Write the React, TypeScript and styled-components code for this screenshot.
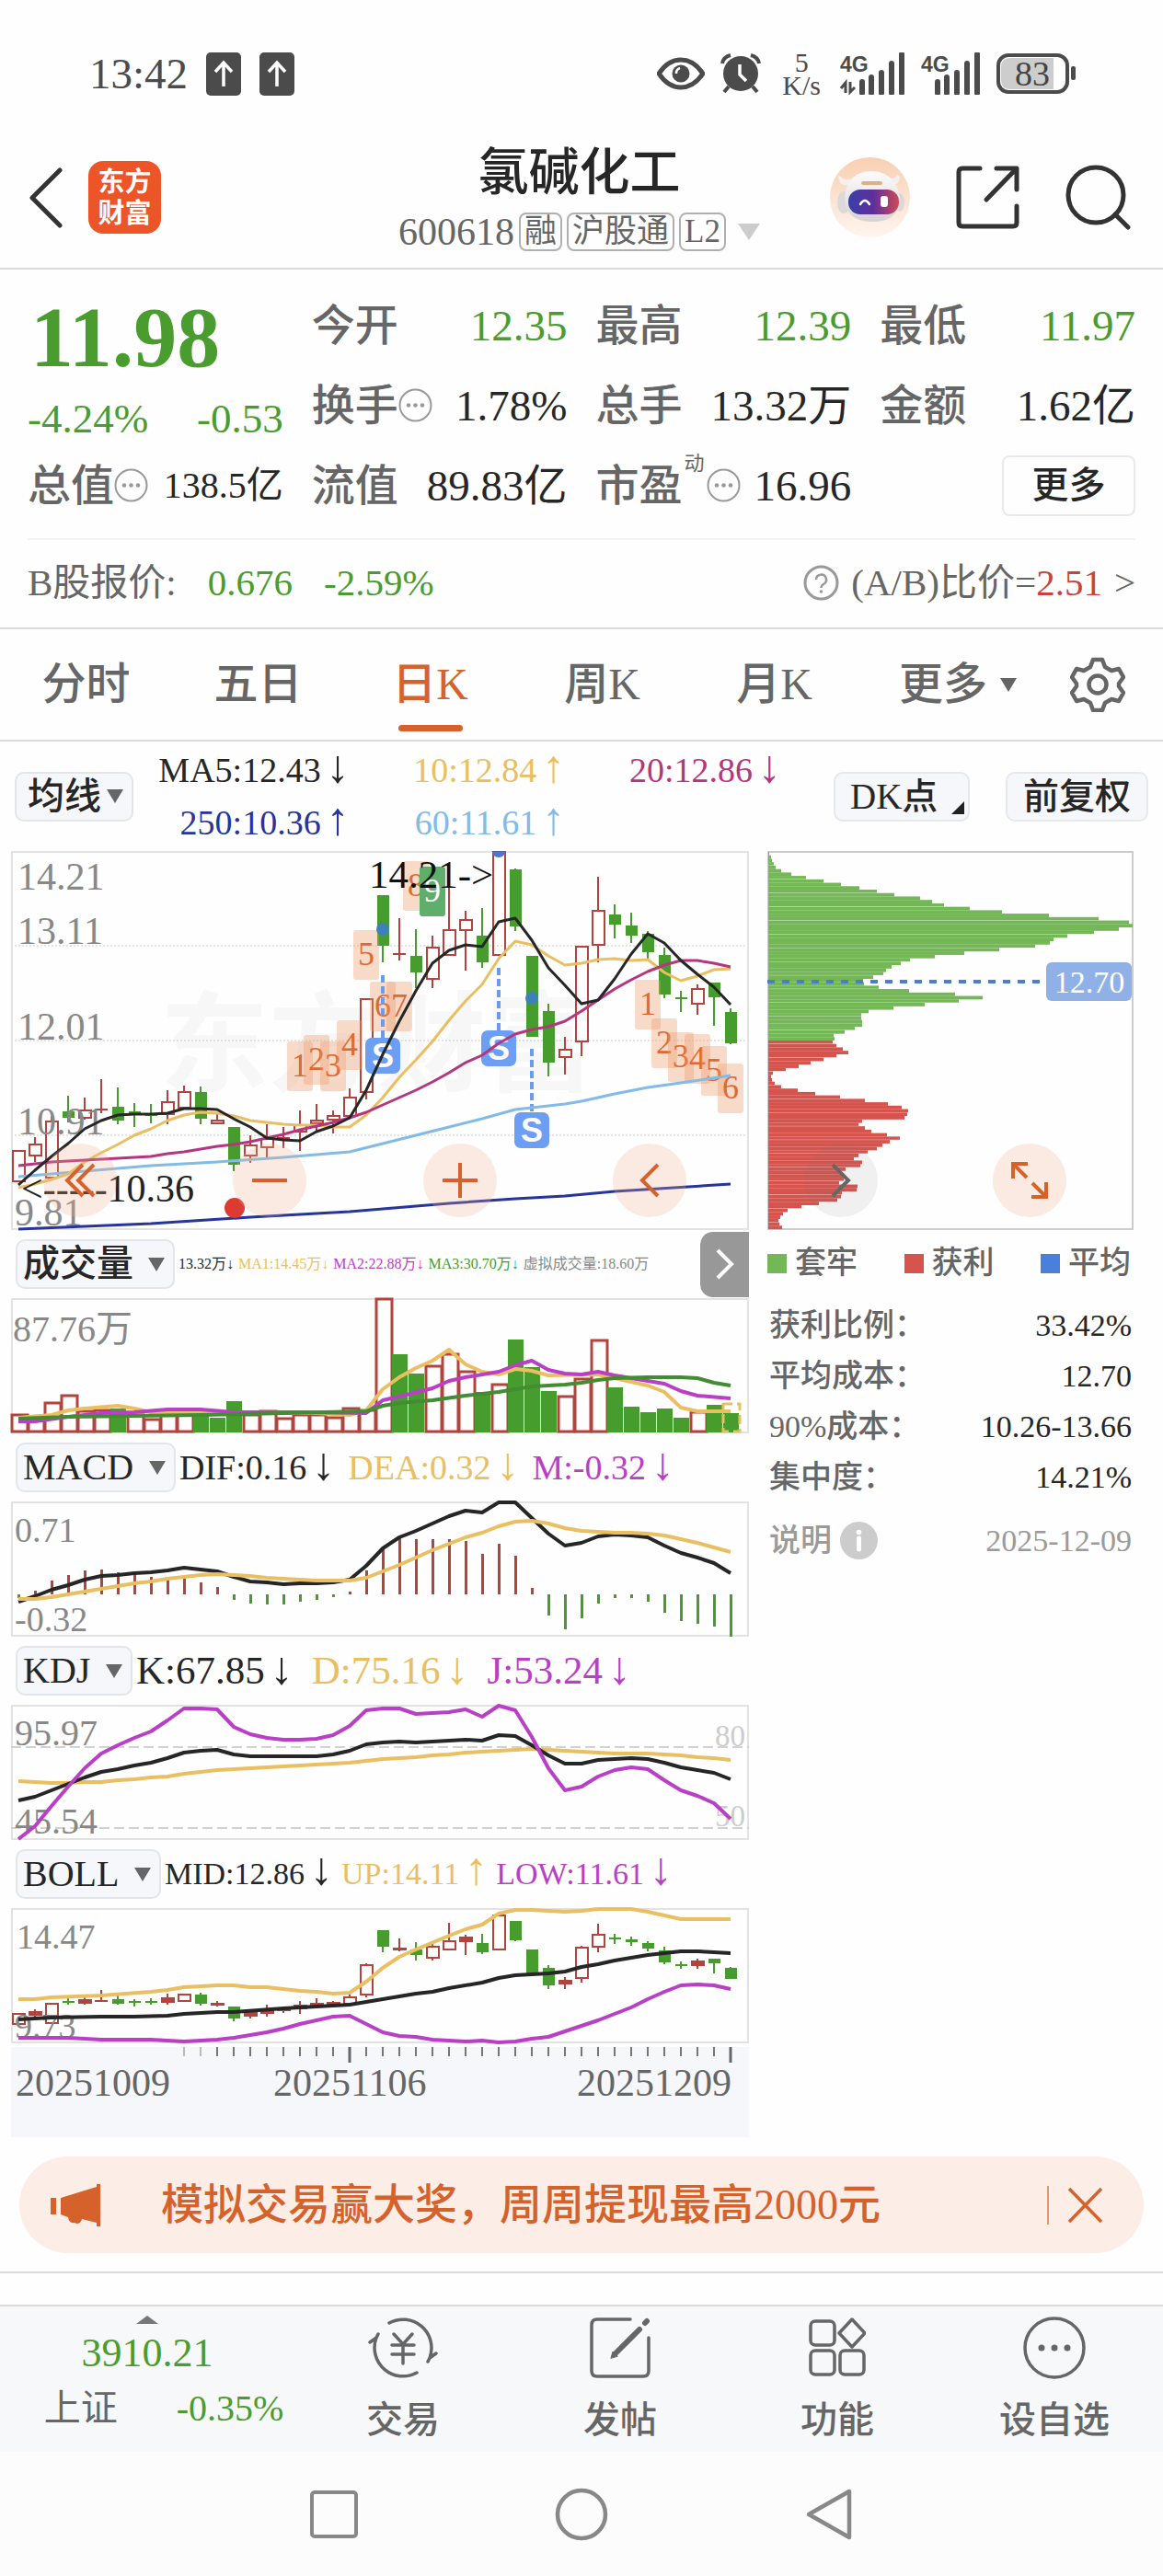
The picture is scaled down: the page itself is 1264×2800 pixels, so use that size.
import React from "react";
import styled, { createGlobalStyle } from "styled-components";

const GREEN = "#4a9c2f";
const CANDLE_GREEN = "#469d2d";
const CANDLE_RED = "#b3443d";
const RED = "#c5443b";
const ORANGE = "#d5622b";
const YELLOW = "#e9bf61";
const MAGENTA = "#b5357f";
const SKY = "#82bae8";
const NAVY = "#27359a";
const PURPLE = "#b83fc6";
const INK = "#262626";
const GREY = "#666666";
const FONT = '"Liberation Serif", "Noto Sans CJK SC", serif';

const GlobalStyle = createGlobalStyle`
  * { box-sizing: border-box; }
  body { margin: 0; background: #fefefe; color: ${INK}; font-family: ${FONT}; }
  button, select { font: inherit; color: inherit; background: none; border: 0; padding: 0; margin: 0; }
  button { cursor: pointer; }
  svg { display: block; flex: none; }
  a { color: inherit; text-decoration: none; }
`;

const Page = styled.div`
  display: flex;
  flex-direction: column;
  width: 100%;
  overflow: hidden;
`;

/* ---------- status bar ---------- */
const StatusBar = styled.div`
  display: flex;
  align-items: center;
  justify-content: space-between;
  height: 144px;
  padding: 16px 94px 0 97px;
  color: #4b4b4b;
`;
const StatusGroup = styled.div<{ $gap: number }>`
  display: flex;
  align-items: center;
  gap: ${(p) => p.$gap}px;
`;
const Clock = styled.span`
  font-size: 47px;
  line-height: 52px;
`;
const Speed = styled.span`
  display: flex;
  flex-direction: column;
  align-items: center;
  padding: 0 4px 0 6px;
  font-size: 30px;
  line-height: 25px;
`;

/* ---------- header ---------- */
const Header = styled.header`
  display: grid;
  grid-template-columns: 1fr auto 1fr;
  align-items: center;
  height: 149px;
  padding: 0 35px 6px 30px;
  border-bottom: 2px solid #dadada;
`;
const HeaderSide = styled.div<{ $end?: boolean }>`
  display: flex;
  align-items: center;
  gap: ${(p) => (p.$end ? 50 : 28)}px;
  justify-content: ${(p) => (p.$end ? "flex-end" : "flex-start")};
`;
const Logo = styled.div`
  display: grid;
  place-content: center;
  width: 79px;
  height: 79px;
  border-radius: 16px;
  background: #eb5528;
  color: #fff;
  font-size: 29px;
  font-weight: 700;
  line-height: 34px;
  text-align: center;
`;
const TitleBlock = styled.div`
  display: flex;
  flex-direction: column;
  align-items: center;
  gap: 13px;
  padding-top: 4px;
`;
const Title = styled.h1`
  margin: 0;
  font-size: 55px;
  font-weight: 500;
  line-height: 58px;
`;
const Subtitle = styled.div`
  display: flex;
  align-items: center;
  gap: 5px;
  color: ${GREY};
  font-size: 42px;
  line-height: 44px;
`;
const Tag = styled.span`
  display: inline-flex;
  align-items: center;
  height: 42px;
  padding: 0 4px;
  border: 2px solid #b0b0b0;
  border-radius: 8px;
  font-size: 35px;
  line-height: 38px;
`;

/* ---------- quote ---------- */
const Quote = styled.section`
  padding: 17px 30px 0;
  border-bottom: 2px solid #dadada;
`;
const QuoteGrid = styled.div`
  display: grid;
  grid-template-columns: repeat(4, 1fr);
  grid-template-rows: repeat(3, 87px);
  column-gap: 31px;
  padding-bottom: 14px;
  border-bottom: 2px solid #f3f3f3;
`;
const PriceCell = styled.div`
  grid-row: span 2;
  display: flex;
  flex-direction: column;
  color: ${GREEN};
`;
const Price = styled.strong`
  padding: 6px 0 0 3px;
  font-size: 94px;
  line-height: 100px;
`;
const Change = styled.div`
  display: flex;
  justify-content: space-between;
  padding-top: 9px;
  font-size: 45px;
  line-height: 60px;
`;
const Cell = styled.div`
  display: flex;
  align-items: center;
  white-space: nowrap;
`;
const Label = styled.span`
  color: ${GREY};
  font-size: 47px;
  font-weight: 500;
  line-height: 60px;
`;
const Value = styled.span<{ $color?: string; $small?: boolean }>`
  margin-left: auto;
  color: ${(p) => p.$color ?? INK};
  font-size: ${(p) => (p.$small ? 40 : 47)}px;
  line-height: 60px;
`;
const Sup = styled.sup`
  align-self: flex-start;
  padding: 6px 2px 0;
  color: ${GREY};
  font-size: 22px;
  line-height: 28px;
`;
const MoreButton = styled.button`
  width: 145px;
  height: 66px;
  margin-left: auto;
  border: 2px solid #e8eaea;
  border-radius: 8px;
  font-size: 40px;
  font-weight: 500;
  line-height: 60px;
`;
const ShareRow = styled.div`
  display: flex;
  align-items: center;
  justify-content: space-between;
  height: 95px;
  padding-bottom: 3px;
  color: ${GREY};
  font-size: 41px;
  line-height: 60px;
`;
const ShareGroup = styled.div`
  display: flex;
  align-items: center;
  gap: 34px;
`;
const RatioLink = styled.a`
  display: flex;
  align-items: center;
  gap: 13px;
`;
const Tint = styled.span<{ $color: string }>`
  color: ${(p) => p.$color};
`;

/* ---------- tabs ---------- */
const Tabs = styled.nav`
  display: flex;
  height: 122px;
  padding-right: 25px;
  border-bottom: 2px solid #dadada;
`;
const Tab = styled.button<{ $active?: boolean; $grow?: number }>`
  position: relative;
  display: flex;
  flex: ${(p) => p.$grow ?? 187} 1 0;
  align-items: center;
  justify-content: center;
  gap: 14px;
  color: ${(p) => (p.$active ? ORANGE : GREY)};
  font-size: 48px;
  font-weight: 500;
  line-height: 60px;
  &::after {
    content: "";
    position: absolute;
    bottom: 9px;
    width: 70px;
    height: 7px;
    border-radius: 4px;
    background: ${(p) => (p.$active ? ORANGE : "transparent")};
  }
`;

/* ---------- moving averages ---------- */
const AverageBar = styled.div`
  display: flex;
  align-items: center;
  height: 119px;
  padding: 0 16px;
`;
const Averages = styled.div`
  display: grid;
  flex: 1;
  grid-template-columns: repeat(3, 1fr);
  margin-right: 57px;
  font-size: 38px;
  line-height: 57px;
  text-align: right;
  white-space: nowrap;
`;
const Arrow = styled.span`
  margin-left: 6px;
  font-size: 50px;
  line-height: 0;
`;
const PillButton = styled.button<{ $wide?: boolean }>`
  display: flex;
  align-items: center;
  justify-content: ${(p) => (p.$wide ? "center" : "flex-start")};
  width: ${(p) => (p.$wide ? 155 : 148)}px;
  height: 54px;
  padding: 0 4px 0 ${(p) => (p.$wide ? 4 : 16)}px;
  margin-left: ${(p) => (p.$wide ? 39 : 0)}px;
  border: 2px solid #e6e8ec;
  border-radius: 10px;
  background: #f6f7fa;
  font-size: 39px;
  font-weight: 500;
  line-height: 50px;
  white-space: nowrap;
  svg { align-self: flex-end; margin: 0 0 6px auto; }
`;
const SelectBox = styled.label<{ $tight?: boolean }>`
  display: flex;
  flex: none;
  align-items: center;
  gap: ${(p) => (p.$tight ? 6 : 16)}px;
  height: 54px;
  padding: 0 9px 0 ${(p) => (p.$tight ? 12 : 6)}px;
  border: 2px solid #e2e5ea;
  border-radius: 10px;
  background: #f6f7fa;
  font-size: 40px;
`;
const Select = styled.select`
  appearance: none;
  outline: 0;
  height: 50px;
  font-weight: 500;
  line-height: 50px;
`;

/* ---------- charts ---------- */
const Charts = styled.main`
  display: grid;
  grid-template-columns: 802fr 398fr;
  column-gap: 20px;
  padding: 0 32px 0 12px;
`;
const Column = styled.div`
  display: flex;
  flex-direction: column;
  min-width: 0;
`;
const ChartBox = styled.div`
  position: relative;
`;
const Plot = styled.svg`
  width: 100%;
  height: auto;
  overflow: visible;
  font-family: ${FONT};
`;
const FloatRow = styled.div<{ $end: number; $start: number }>`
  position: absolute;
  right: 0;
  bottom: 14px;
  left: 0;
  display: flex;
  justify-content: space-between;
  padding: 0 ${(p) => p.$end}px 0 ${(p) => p.$start}px;
`;
const RoundButton = styled.button<{ $grey?: boolean }>`
  display: grid;
  place-items: center;
  width: 80px;
  height: 80px;
  border-radius: 50%;
  background: ${(p) => (p.$grey ? "rgba(120,120,120,0.1)" : "rgba(240,176,140,0.25)")};
`;
const IndicatorBar = styled.div<{ $size: number; $gap: number }>`
  display: flex;
  align-items: center;
  gap: ${(p) => p.$gap}px;
  height: 74px;
  padding-left: 5px;
  font-size: ${(p) => p.$size}px;
  line-height: 54px;
  white-space: nowrap;
  ${SelectBox} { margin-right: ${(p) => 4 - p.$gap}px; }
`;
const CollapseButton = styled.button`
  display: grid;
  place-items: center;
  width: 53px;
  height: 71px;
  margin-left: auto;
  border-radius: 14px 0 0 14px;
  background: #989898;
`;
const Legend = styled.div`
  display: flex;
  align-items: center;
  justify-content: space-between;
  height: 72px;
  padding-right: 3px;
  color: ${GREY};
  font-size: 34px;
  font-weight: 500;
  line-height: 54px;
`;
const LegendItem = styled.span<{ $color: string }>`
  display: flex;
  align-items: center;
  gap: 9px;
  &::before {
    content: "";
    width: 21px;
    height: 21px;
    background: ${(p) => p.$color};
  }
`;
const Stats = styled.dl`
  display: flex;
  flex-direction: column;
  margin: 4px 0 0;
  padding: 0 2px;
  font-size: 34px;
  line-height: 55px;
`;
const StatRow = styled.div<{ $muted?: boolean }>`
  display: flex;
  align-items: center;
  justify-content: space-between;
  margin-top: ${(p) => (p.$muted ? 14 : 0)}px;
  color: ${(p) => (p.$muted ? "#9a9a9a" : INK)};
  dt {
    display: flex;
    align-items: center;
    gap: 9px;
    color: ${(p) => (p.$muted ? "#9a9a9a" : GREY)};
    font-weight: 500;
  }
  dd { margin: 0; }
`;
const TimeAxis = styled.div`
  margin-top: 4px;
  background: #f6f7fa;
`;

/* ---------- banner and bottom ---------- */
const Banner = styled.aside`
  display: flex;
  align-items: center;
  height: 105px;
  margin: 21px 21px 20px;
  padding: 0 44px 0 34px;
  border-radius: 53px;
  background: #fceee6;
  color: ${ORANGE};
  font-size: 46px;
  font-weight: 500;
  line-height: 60px;
`;
const BannerText = styled.a`
  flex: 1;
  margin-left: 66px;
`;
const CloseButton = styled.button`
  padding-left: 20px;
  border-left: 2px solid #e0966e;
`;
const Spacer = styled.div`
  height: 36px;
  border-top: 2px solid #dadada;
`;
const BottomBar = styled.nav`
  display: flex;
  height: 160px;
  border-top: 2px solid #dadada;
  background: #f7f8fa;
`;
const IndexCell = styled.a`
  display: flex;
  flex: 320 1 0;
  flex-direction: column;
  align-items: center;
  gap: 4px;
  padding-top: 10px;
  color: ${GREEN};
  font-size: 44px;
  line-height: 56px;
`;
const IndexLine = styled.span`
  display: flex;
  gap: 64px;
  padding-left: 36px;
  font-size: 40px;
  line-height: 56px;
`;
const BottomItem = styled.button`
  display: flex;
  flex: 236 1 0;
  flex-direction: column;
  align-items: center;
  gap: 18px;
  padding-top: 10px;
  color: ${GREY};
  font-size: 40px;
  font-weight: 500;
  line-height: 52px;
`;
const SystemNav = styled.div`
  display: flex;
  align-items: center;
  justify-content: center;
  gap: 214px;
  height: 136px;
  background: #fcfcfc;
`;

/* ---------- chart data ---------- */
type Kind = "r" | "g";
type Candle = [Kind, number, number, number, number]; // kind, high, low, body top, body bottom
type Point = [number, number];

const X0 = 8;
const STEP = 18;
const cx = (i: number) => X0 + STEP * i;

const DAY: Candle[] = [
  ["r", 325, 360, 325, 360], ["r", 311, 338, 318, 332], ["r", 288, 356, 293, 356], ["g", 266, 295, 283, 290],
  ["r", 268, 292, 281, 291], ["r", 248, 285, 280, 281], ["g", 257, 297, 278, 293], ["g", 274, 300, 283, 285],
  ["g", 275, 296, 286, 287], ["r", 260, 297, 272, 287], ["r", 255, 280, 261, 280], ["g", 256, 297, 262, 291],
  ["r", 285, 297, 292, 297], ["g", 300, 348, 300, 341], ["r", 309, 339, 319, 332], ["r", 297, 333, 312, 323],
  ["r", 300, 323, 311, 312], ["r", 282, 326, 297, 306], ["r", 275, 305, 292, 297], ["r", 282, 307, 287, 293],
  ["r", 258, 291, 267, 289], ["r", 160, 270, 160, 263], ["g", 48, 121, 48, 103], ["r", 73, 119, 111, 112],
  ["g", 85, 149, 114, 132], ["r", 92, 149, 104, 140], ["r", 25, 114, 85, 114], ["r", 65, 130, 74, 87],
  ["g", 62, 127, 92, 121], ["r", 0, 114, 0, 114], ["g", 19, 87, 20, 82], ["g", 114, 202, 114, 202],
  ["g", 166, 245, 174, 230], ["r", 202, 243, 215, 225], ["r", 103, 223, 103, 208], ["r", 28, 121, 64, 103],
  ["g", 58, 95, 69, 80], ["g", 67, 100, 81, 92], ["g", 87, 118, 90, 110], ["g", 105, 160, 113, 156],
  ["g", 152, 175, 159, 160], ["r", 145, 178, 149, 167], ["g", 143, 190, 143, 159], ["g", 171, 210, 175, 209],
];
const MA5 = [363, 347, 332, 318, 302, 293, 287, 286, 286, 285, 280, 280, 281, 291, 300, 312, 314, 315, 305, 299, 290, 260, 221, 185, 152, 122, 108, 102, 104, 77, 73, 97, 127, 146, 166, 162, 139, 112, 90, 100, 119, 134, 148, 167];
const MA10 = [366, 362, 357, 351, 338, 328, 319, 309, 302, 293, 287, 284, 285, 288, 293, 295, 297, 298, 298, 300, 300, 287, 268, 246, 227, 207, 184, 163, 145, 117, 98, 102, 114, 124, 122, 118, 117, 119, 118, 132, 141, 136, 129, 128];
const MA20 = [342, 340, 338, 337, 336, 335, 334, 333, 332, 329, 327, 324, 321, 319, 316, 312, 308, 303, 299, 295, 290, 284, 276, 268, 260, 251, 241, 230, 222, 209, 199, 194, 191, 185, 174, 162, 150, 140, 131, 124, 119, 119, 122, 126];
const MA60: Point[] = [[0, 354], [4, 348], [8, 342], [12, 338], [16, 333], [20, 327], [22, 318], [24, 309], [26, 300], [28, 291], [30, 281], [31, 279], [33, 275], [34, 272], [36, 264], [38, 257], [40, 252], [43, 244]];
const MA250: Point[] = [[0, 411], [8, 405], [14, 398], [20, 392], [26, 383], [30, 378], [33, 375], [36, 370], [43, 362]];

const COUNTS: [number, number, string][] = [
  [17, 207, "1"], [18, 200, "2"], [19, 207, "3"], [20, 184, "4"], [21, 86, "5"], [22, 142, "6"], [23, 142, "7"], [24, 11, "8"],
  [38, 140, "1"], [39, 182, "2"], [40, 197, "3"], [41, 199, "4"], [42, 212, "5"], [43, 231, "6"],
];
const SELLS: [number, number, number][] = [[22, 135, 203], [29, 127, 195], [31, 215, 284]];

const VOL_KIND = "rrrrrrgrrrrgggrrrrrrrrrggrrrgrgggrrrgggggrgg";
const VOL_TOP = [126, 128, 113, 105, 122, 121, 120, 126, 131, 126, 126, 123, 130, 112, 126, 122, 130, 126, 126, 129, 119, 121, 0, 61, 82, 73, 60, 79, 102, 93, 45, 75, 101, 106, 87, 45, 97, 118, 124, 120, 130, 123, 116, 125];
const VOL_MA1: Point[] = [[0, 130], [2, 127], [3, 122], [4, 120], [6, 117], [7, 120], [8, 124], [12, 124], [15, 124], [18, 125], [20, 127], [21, 122], [22, 99], [23, 86], [24, 76], [25, 68], [26, 56], [27, 72], [28, 80], [29, 83], [30, 77], [31, 79], [32, 84], [35, 83], [36, 87], [37, 91], [38, 95], [39, 102], [40, 119], [41, 123], [43, 123]];
const VOL_MA2: Point[] = [[0, 134], [1, 134], [3, 129], [5, 125], [7, 124], [9, 121], [11, 121], [13, 124], [17, 124], [21, 125], [22, 111], [23, 107], [25, 98], [26, 90], [27, 86], [29, 80], [30, 73], [31, 68], [32, 78], [33, 82], [34, 83], [35, 80], [36, 84], [38, 90], [39, 93], [40, 101], [41, 106], [43, 109]];
const VOL_MA3: Point[] = [[0, 131], [3, 129], [7, 128], [11, 127], [16, 125], [21, 123], [22, 117], [23, 114], [25, 111], [27, 106], [29, 102], [31, 96], [33, 94], [34, 92], [35, 89], [36, 87], [38, 86], [40, 86], [41, 87], [42, 92], [43, 95]];

const MACD = [-4, 4, 15, 21, 26, 27, 24, 22, 19, 19, 20, 13, 8, -6, -10, -11, -11, -8, -6, -3, 3, 26, 50, 61, 60, 60, 60, 58, 44, 55, 42, 7, -23, -38, -26, -10, -4, -4, -8, -20, -29, -32, -35, -46];
const DIF = [109, 103, 96, 91, 85, 81, 80, 78, 77, 75, 72, 74, 76, 82, 87, 88, 90, 89, 89, 88, 85, 70, 51, 39, 32, 24, 16, 10, 12, 1, 1, 18, 35, 48, 45, 38, 36, 37, 39, 48, 56, 61, 67, 78];
const DEA = [106, 106, 104, 101, 98, 95, 92, 89, 87, 84, 82, 80, 79, 80, 81, 83, 84, 85, 86, 86, 86, 83, 76, 69, 61, 53, 46, 39, 34, 27, 22, 21, 24, 29, 32, 33, 34, 34, 35, 37, 41, 45, 50, 55];

const K = [104, 100, 93, 86, 79, 73, 70, 66, 63, 58, 52, 50, 49, 54, 56, 56, 56, 56, 56, 54, 50, 43, 41, 40, 41, 40, 39, 38, 39, 33, 34, 44, 55, 64, 64, 60, 59, 58, 59, 63, 68, 71, 74, 81];
const D = [83, 84, 85, 85, 84, 84, 82, 81, 79, 78, 75, 73, 71, 70, 69, 68, 67, 66, 65, 64, 63, 61, 59, 58, 57, 55, 54, 52, 51, 50, 49, 48, 49, 50, 51, 52, 53, 53, 53, 54, 55, 57, 58, 60];
const J = [146, 132, 110, 89, 69, 53, 44, 36, 29, 17, 4, 4, 5, 24, 32, 36, 38, 38, 37, 33, 23, 6, 4, 4, 10, 9, 8, 5, 13, 1, 6, 35, 69, 93, 89, 78, 71, 68, 70, 82, 93, 99, 107, 124];

const BOLL: Candle[] = [
  ["r", 114, 127, 114, 127], ["r", 110, 119, 112, 117], ["r", 103, 126, 103, 126], ["g", 95, 105, 101, 103],
  ["r", 96, 105, 99, 104], ["r", 89, 102, 100, 102], ["g", 93, 105, 99, 104], ["g", 99, 107, 101, 103],
  ["g", 98, 105, 101, 103], ["r", 93, 105, 97, 103], ["r", 93, 102, 93, 102], ["g", 92, 106, 94, 104],
  ["r", 101, 107, 103, 106], ["g", 107, 123, 107, 120], ["r", 111, 120, 113, 118], ["r", 105, 118, 110, 115],
  ["r", 108, 114, 109, 112], ["r", 101, 115, 105, 110], ["r", 98, 109, 103, 108], ["r", 101, 108, 102, 106],
  ["r", 93, 106, 96, 105], ["r", 60, 97, 61, 95], ["g", 24, 48, 24, 42], ["r", 33, 47, 43, 46],
  ["g", 37, 57, 45, 51], ["r", 39, 57, 41, 55], ["r", 16, 46, 35, 46], ["r", 29, 51, 31, 37],
  ["g", 28, 50, 38, 48], ["r", 7, 46, 7, 46], ["g", 14, 36, 14, 35], ["g", 45, 72, 45, 72],
  ["g", 62, 88, 65, 84], ["r", 75, 88, 78, 83], ["r", 41, 81, 42, 77], ["r", 17, 48, 28, 43],
  ["g", 28, 39, 32, 34], ["g", 31, 41, 34, 37], ["g", 36, 47, 38, 44], ["g", 42, 61, 46, 59],
  ["g", 58, 66, 61, 62], ["r", 55, 66, 57, 63], ["g", 55, 71, 55, 60], ["g", 64, 77, 65, 77],
];
const MID: Point[] = [[0, 121], [2, 119], [5, 118], [7, 118], [9, 117], [10, 115], [12, 113], [13, 113], [16, 109], [18, 107], [20, 105], [21, 102], [22, 99], [24, 93], [25, 91], [26, 87], [28, 81], [29, 76], [30, 73], [32, 71], [33, 69], [34, 64], [35, 61], [36, 57], [38, 51], [39, 49], [40, 47], [41, 47], [42, 48], [43, 49]];
const UP: Point[] = [[0, 99], [1, 99], [2, 97], [5, 95], [8, 91], [9, 89], [10, 86], [12, 84], [13, 84], [14, 86], [15, 86], [17, 90], [18, 91], [19, 93], [20, 92], [21, 80], [22, 65], [23, 53], [24, 45], [26, 30], [27, 23], [28, 18], [29, 6], [30, 2], [31, 2], [33, 4], [34, 3], [35, 1], [37, 1], [38, 4], [39, 8], [40, 12], [43, 12]];
const LOW: Point[] = [[0, 141], [3, 141], [5, 143], [8, 143], [10, 145], [12, 143], [13, 141], [15, 135], [16, 131], [17, 126], [19, 118], [20, 117], [21, 126], [22, 135], [23, 139], [24, 140], [25, 143], [27, 145], [28, 144], [29, 146], [30, 145], [31, 142], [32, 140], [33, 134], [35, 122], [36, 115], [37, 108], [38, 99], [39, 91], [40, 84], [41, 83], [42, 84], [43, 88]];

const TRAPPED = [1, 3, 4, 6, 8, 14, 25, 41, 60, 79, 99, 118, 137, 165, 178, 191, 219, 254, 305, 359, 392, 396, 381, 354, 325, 310, 306, 290, 251, 213, 181, 154, 144, 134, 128, 125, 114, 103, 104, 120, 153, 203, 233, 207, 170, 136, 109, 101, 101, 102, 102, 94, 83, 71, 72];
const PROFIT = [70, 74, 81, 87, 74, 60, 46, 33, 19, 5, 3, 4, 7, 14, 32, 51, 78, 105, 130, 145, 152, 151, 148, 102, 98, 105, 112, 129, 143, 132, 124, 118, 108, 98, 93, 102, 100, 84, 78, 83, 82, 77, 97, 96, 80, 79, 75, 55, 36, 21, 16, 13, 11, 12, 15];

/* ---------- chart parts ---------- */
function Line({ data, color, width = 4 }: { data: number[] | Point[]; color: string; width?: number }) {
  const pts = (data as (number | Point)[]).map((d, i) => (typeof d === "number" ? `${cx(i)},${d}` : `${cx(d[0])},${d[1]}`));
  return <polyline points={pts.join(" ")} fill="none" stroke={color} strokeWidth={width} strokeLinejoin="round" />;
}

function Candles({ data, filled }: { data: Candle[]; filled?: boolean }) {
  return (
    <>
      {data.map(([kind, hi, lo, top, bot], i) => {
        const x = cx(i);
        const h = bot - top;
        if (kind === "g")
          return (
            <g key={i} fill={CANDLE_GREEN}>
              <rect x={x - 1} y={hi} width={2} height={lo - hi} />
              <rect x={x - 6} y={top} width={13} height={Math.max(h, 2)} />
            </g>
          );
        return (
          <g key={i} stroke={CANDLE_RED} strokeWidth={2} fill={filled && h < 8 ? CANDLE_RED : "none"}>
            {top > hi && <path d={`M${x} ${hi}V${top}`} />}
            {lo > bot && <path d={`M${x} ${bot}V${lo}`} />}
            {h < 3 ? <path d={`M${x - 7} ${top + 1}H${x + 7}`} /> : <rect x={x - 6} y={top + 1} width={13} height={h - 2} />}
          </g>
        );
      })}
    </>
  );
}

const Frame = ({ w = 802, h }: { w?: number; h: number }) => (
  <rect x={1} y={1} width={w - 2} height={h - 2} fill="none" stroke="#e2e2e2" strokeWidth={2} />
);

const AxisText = ({ x, y, size = 38, color = "#888", children }: { x: number; y: number; size?: number; color?: string; children: string }) => (
  <text x={x} y={y} fontSize={size} fill={color}>{children}</text>
);

function DayChart() {
  return (
    <Plot viewBox="0 0 802 412" role="img" aria-label="日K">
      <text x={162} y={252} fontSize={118} fontWeight={700} fill="#f7f7f7">东方财富</text>
      {[103, 206, 309].map((y) => (
        <path key={y} d={`M0 ${y}H802`} stroke="#c9c9c9" strokeDasharray="2 2" />
      ))}
      <Frame h={412} />
      <AxisText x={7} y={42} size={42}>14.21</AxisText>
      <AxisText x={7} y={101} size={42}>13.11</AxisText>
      <AxisText x={7} y={205} size={42}>12.01</AxisText>
      <Candles data={DAY} />
      <AxisText x={7} y={308} size={42}>10.91</AxisText>
      <AxisText x={4} y={407} size={42}>9.81</AxisText>
      {COUNTS.map(([i, y, n]) => (
        <g key={i}>
          <rect x={cx(i) - 14} y={y} width={28} height={54} rx={3} fill="#ee9b6c" opacity={0.36} />
          <text x={cx(i)} y={y + 38} fontSize={36} textAnchor="middle" fill="#dd6a35">{n}</text>
        </g>
      ))}
      <rect x={444} y={17} width={28} height={54} rx={3} fill="#5fae6c" />
      <text x={458} y={55} fontSize={36} textAnchor="middle" fill="#fff">9</text>
      <circle cx={cx(22)} cy={85} r={7} fill="#3f80bb" />
      <circle cx={cx(31)} cy={160} r={7} fill="#3f80bb" />
      <path d={`M${cx(29) - 7} 1a7 6 0 0 0 14 0z`} fill="#4f74d8" />
      {SELLS.map(([i, from, to]) => (
        <g key={i}>
          <path d={`M${cx(i)} ${from}V${to}`} stroke="#6b9bea" strokeWidth={4} strokeDasharray="8 4" />
          <rect x={cx(i) - 19} y={to} width={38} height={39} rx={7} fill="#6c9ef3" />
          <text x={cx(i)} y={to + 32} fontSize={36} fontWeight={700} fontFamily="Liberation Sans" textAnchor="middle" fill="#fff">S</text>
        </g>
      ))}
      <Line data={MA250} color={NAVY} width={3} />
      <Line data={MA60} color={SKY} width={3} />
      <Line data={MA10} color={YELLOW} width={3} />
      <Line data={MA20} color={MAGENTA} width={3} />
      <Line data={MA5} color={INK} width={3} />
      <circle cx={243} cy={388} r={11} fill="#dc3b33" />
      <AxisText x={389} y={40} size={43} color="#111">14.21-&gt;</AxisText>
      <AxisText x={11} y={381} size={42} color="#222">&lt;-----10.36</AxisText>
    </Plot>
  );
}

function VolumeChart() {
  return (
    <Plot viewBox="0 0 802 147" role="img" aria-label="成交量">
      <Frame h={147} />
      {VOL_TOP.map((top, i) => {
        const x = cx(i);
        return VOL_KIND[i] === "g" ? (
          <rect key={i} x={x - 8} y={top} width={17} height={146 - top} fill={CANDLE_GREEN} />
        ) : (
          <rect key={i} x={x - 7} y={top + 1} width={17} height={144 - top} fill="none" stroke={CANDLE_RED} strokeWidth={3} />
        );
      })}
      <rect x={cx(43) - 8} y={115} width={18} height={30} fill="none" stroke={YELLOW} strokeWidth={3} strokeDasharray="10 5" />
      <AxisText x={2} y={47} size={40}>87.76万</AxisText>
      <Line data={VOL_MA1} color={YELLOW} />
      <Line data={VOL_MA2} color={PURPLE} />
      <Line data={VOL_MA3} color="#428c33" />
    </Plot>
  );
}

function MacdChart() {
  return (
    <Plot viewBox="0 0 802 147" role="img" aria-label="MACD">
      <Frame h={147} />
      {MACD.map((v, i) => (
        <rect key={i} x={cx(i) - 1} y={v > 0 ? 101 - v : 101} width={3} height={Math.abs(v)} fill={v > 0 ? CANDLE_RED : CANDLE_GREEN} />
      ))}
      <AxisText x={4} y={44}>0.71</AxisText>
      <AxisText x={4} y={141}>-0.32</AxisText>
      <Line data={DIF} color={INK} />
      <Line data={DEA} color={YELLOW} />
    </Plot>
  );
}

function KdjChart() {
  return (
    <Plot viewBox="0 0 802 147" role="img" aria-label="KDJ">
      <Frame h={147} />
      <path d="M0 46H802M0 134H802" stroke="#d2d2d2" strokeWidth={2} strokeDasharray="11 5" />
      <AxisText x={4} y={44} size={40}>95.97</AxisText>
      <AxisText x={4} y={140} size={40}>45.54</AxisText>
      <AxisText x={765} y={45} size={33} color="#ccc">80</AxisText>
      <AxisText x={765} y={132} size={33} color="#ccc">50</AxisText>
      <Line data={D} color={YELLOW} />
      <Line data={K} color={INK} />
      <Line data={J} color={PURPLE} />
    </Plot>
  );
}

function BollChart() {
  return (
    <Plot viewBox="0 0 802 147" role="img" aria-label="BOLL">
      <Frame h={147} />
      <Candles data={BOLL} filled />
      <AxisText x={6} y={44}>14.47</AxisText>
      <AxisText x={4} y={141}>9.73</AxisText>
      <Line data={LOW} color={PURPLE} />
      <Line data={UP} color={YELLOW} />
      <Line data={MID} color={INK} />
    </Plot>
  );
}

function TimeTicks() {
  return (
    <Plot viewBox="0 0 802 98" role="img" aria-label="日期">
      {Array.from({ length: 34 }, (_, n) => n + 10).map((i) => {
        const major = i === 20 || i === 43;
        return <path key={i} d={`M${cx(i)} 0V${major ? 17 : 10}`} stroke={major ? "#666" : i < 12 ? "#bbb" : "#777"} strokeWidth={major ? 3 : 2} />;
      })}
      <AxisText x={5} y={53} size={42} color={GREY}>20251009</AxisText>
      <AxisText x={285} y={53} size={42} color={GREY}>20251106</AxisText>
      <AxisText x={615} y={53} size={42} color={GREY}>20251209</AxisText>
    </Plot>
  );
}

function ChipChart() {
  const pitch = 410 / (TRAPPED.length + PROFIT.length);
  return (
    <Plot viewBox="0 0 398 412" role="img" aria-label="筹码分布">
      <rect x={1} y={1} width={396} height={410} fill="none" stroke="#cccccc" strokeWidth={2} />
      {[...TRAPPED, ...PROFIT].map((w, i) => (
        <rect key={i} x={1} y={1 + i * pitch} width={w} height={pitch + (i % 4 === 3 ? -0.3 : 0.1)} fill={i < TRAPPED.length ? "#73b756" : "#d6544e"} />
      ))}
      <path d="M0 142H297" stroke="#4a7fc8" strokeWidth={4} strokeDasharray="8 8" />
      <rect x={303} y={121} width={93} height={42} rx={6} fill="#90b1e8" />
      <text x={350} y={154} fontSize={34} fill="#fff" textAnchor="middle">12.70</text>
    </Plot>
  );
}

/* ---------- icons ---------- */
const Caret = ({ size = 18 }: { size?: number }) => (
  <svg width={size} height={size - 3} viewBox="0 0 18 15"><path d="M0 0H18L9 15z" fill="#666" /></svg>
);
const Dots = () => (
  <svg width="37" height="37" viewBox="0 0 37 37">
    <circle cx="18.5" cy="18.5" r="17" fill="none" stroke="#999" strokeWidth="2" />
    <g fill="#999"><circle cx="11" cy="18.5" r="2.3" /><circle cx="18.5" cy="18.5" r="2.3" /><circle cx="26" cy="18.5" r="2.3" /></g>
  </svg>
);
const UploadIcon = () => (
  <svg width="38" height="47" viewBox="0 0 38 47">
    <rect width="38" height="47" rx="5" fill="#4b4b4b" />
    <path d="M19 37V13M10 21L19 11L28 21" fill="none" stroke="#fff" strokeWidth="3.5" />
  </svg>
);
const EyeIcon = () => (
  <svg width="52" height="36" viewBox="0 0 52 36">
    <path d="M2 18C10 6 18 3 26 3s16 3 24 15C42 30 34 33 26 33S10 30 2 18z" fill="none" stroke="#4b4b4b" strokeWidth="5" />
    <circle cx="26" cy="18" r="9.5" fill="#4b4b4b" /><path d="M21 18a6 6 0 0 1 4-6" stroke="#fff" strokeWidth="2.5" fill="none" />
  </svg>
);
const AlarmIcon = () => (
  <svg width="44" height="44" viewBox="0 0 44 44">
    <circle cx="22" cy="22" r="19" fill="#4b4b4b" />
    <path d="M2 11Q3 4 11 2M42 11Q41 4 33 2M9 36L4 42M35 36L40 42" stroke="#4b4b4b" strokeWidth="4" fill="none" />
    <path d="M21 12V23L28 30" stroke="#fff" strokeWidth="3.5" fill="none" />
  </svg>
);
const Signal = ({ data }: { data?: boolean }) => (
  <svg width={data ? 71 : 65} height="46" viewBox={data ? "0 0 71 46" : "6 0 65 46"}>
    <text x={data ? 0 : 6} y="21" fontSize="23" fontWeight="700" fontFamily="Liberation Sans" fill="#4b4b4b">4G</text>
    <path d="M24 32V44M34 27V44M45 22V44M56 12V44M67 2V44" stroke="#4b4b4b" strokeWidth="6" strokeLinecap="round" />
    {data && <path d="M6 44V33L1 39M11 32V43L16 38" stroke="#4b4b4b" strokeWidth="3" fill="none" />}
  </svg>
);
const Battery = () => (
  <svg width="87" height="44" viewBox="0 0 87 44">
    <rect x="2" y="2" width="75" height="40" rx="11" fill="none" stroke="#4b4b4b" strokeWidth="4" />
    <path d="M15 5H62V39H15Q5 39 5 29V15Q5 5 15 5z" fill="#cdcdcd" />
    <rect x="81" y="14" width="5" height="15" rx="2" fill="#4b4b4b" />
    <text x="39" y="35" fontSize="38" textAnchor="middle" fill="#444">83</text>
  </svg>
);
const Robot = () => (
  <svg width="87" height="87" viewBox="0 0 87 87">
    <defs>
      <linearGradient id="halo" x1="0" y1="0" x2="0" y2="1"><stop offset="0" stopColor="#f8cfb2" /><stop offset="1" stopColor="#fff5ee" /></linearGradient>
      <linearGradient id="visor" x1="0" y1="0" x2="1" y2="0"><stop offset="0" stopColor="#3a3fa8" /><stop offset=".5" stopColor="#5f2f9c" /><stop offset="1" stopColor="#cf4a55" /></linearGradient>
      <linearGradient id="shell" x1="0" y1="0" x2="0" y2="1"><stop offset="0" stopColor="#fdfcfb" /><stop offset="1" stopColor="#d6d2d4" /></linearGradient>
    </defs>
    <circle cx="43.5" cy="43.5" r="43.5" fill="url(#halo)" />
    <path d="M22 30Q9 32 9 20L12 21Q15 26 25 23zM64 30Q76 32 76 20L73 19Q70 25 61 22z" fill="#f5f0ee" />
    <ellipse cx="15" cy="49" rx="7" ry="12" fill="#dcd8da" />
    <ellipse cx="76" cy="49" rx="5" ry="10" fill="#dcd8da" />
    <path d="M45 15C63 15 74 27 76 44C77 60 66 70 47 70S16 62 16 44C17 27 27 15 45 15z" fill="url(#shell)" />
    <rect x="20" y="35" width="55" height="27" rx="13" fill="url(#visor)" />
    <path d="M33 51Q38 43 43 51" stroke="#fff" strokeWidth="2.5" fill="none" strokeLinecap="round" />
    <rect x="55" y="42" width="8" height="12" rx="3" fill="#fff" />
    <rect x="34" y="26" width="23" height="4" rx="2" fill="#deb088" />
  </svg>
);
const Gear = () => (
  <svg width="60" height="60" viewBox="0 0 60 60" fill="none" stroke="#666" strokeWidth="4.5" strokeLinejoin="round">
    <path d="M25 3H35L38 11L45 15L53 13L58 22L53 29V32L58 39L53 48L45 46L38 50L35 58H25L22 50L15 46L7 48L2 39L7 32V29L2 22L7 13L15 15L22 11z" />
    <circle cx="30" cy="30" r="9.5" />
  </svg>
);

const Dropdown = ({ label, value, tight }: { label: string; value: string; tight?: boolean }) => (
  <SelectBox $tight={tight}>
    <Select aria-label={label} defaultValue={value}><option>{value}</option></Select>
    <Caret />
  </SelectBox>
);

const Reading = ({ color, down, children }: { color: string; down?: boolean; children: string }) => (
  <Tint $color={color}>{children}<Arrow>{down ? "↓" : "↑"}</Arrow></Tint>
);

export default function App() {
  return (
    <Page>
      <GlobalStyle />
      <StatusBar>
        <StatusGroup $gap={20}>
          <Clock>13:42</Clock>
          <UploadIcon />
          <UploadIcon />
        </StatusGroup>
        <StatusGroup $gap={17}>
          <EyeIcon />
          <AlarmIcon />
          <Speed><span>5</span><span>K/s</span></Speed>
          <Signal data />
          <Signal />
          <Battery />
        </StatusGroup>
      </StatusBar>

      <Header>
        <HeaderSide>
          <button aria-label="返回">
            <svg width="38" height="66" viewBox="0 0 38 66"><path d="M35 3L5 33L35 63" fill="none" stroke="#333" strokeWidth="5" strokeLinecap="round" strokeLinejoin="round" /></svg>
          </button>
          <Logo>东方<br />财富</Logo>
        </HeaderSide>
        <TitleBlock>
          <Title>氯碱化工</Title>
          <Subtitle>
            <span>600618</span>
            <Tag>融</Tag><Tag>沪股通</Tag><Tag>L2</Tag>
            <svg width="32" height="18" viewBox="-8 0 32 18"><path d="M0 0H24L12 18z" fill="#ccc" /></svg>
          </Subtitle>
        </TitleBlock>
        <HeaderSide $end>
          <button aria-label="助手"><Robot /></button>
          <button aria-label="分享">
            <svg width="69" height="69" viewBox="0 0 69 69" fill="none" stroke="#333" strokeWidth="5" strokeLinecap="round" strokeLinejoin="round">
              <path d="M26 3H7Q3 3 3 7V62Q3 66 7 66H62Q66 66 66 62V44M44 3H66V26M65 4L33 37" />
            </svg>
          </button>
          <button aria-label="搜索">
            <svg width="71" height="71" viewBox="0 0 71 71" fill="none" stroke="#333" strokeWidth="5" strokeLinecap="round"><circle cx="33" cy="33" r="30" /><path d="M54 54L68 68" /></svg>
          </button>
        </HeaderSide>
      </Header>

      <Quote>
        <QuoteGrid>
          <PriceCell>
            <Price>11.98</Price>
            <Change><span>-4.24%</span><span>-0.53</span></Change>
          </PriceCell>
          <Cell><Label>今开</Label><Value $color={GREEN}>12.35</Value></Cell>
          <Cell><Label>最高</Label><Value $color={GREEN}>12.39</Value></Cell>
          <Cell><Label>最低</Label><Value $color={GREEN}>11.97</Value></Cell>
          <Cell><Label>换手</Label><Dots /><Value>1.78%</Value></Cell>
          <Cell><Label>总手</Label><Value>13.32万</Value></Cell>
          <Cell><Label>金额</Label><Value>1.62亿</Value></Cell>
          <Cell><Label>总值</Label><Dots /><Value $small>138.5亿</Value></Cell>
          <Cell><Label>流值</Label><Value>89.83亿</Value></Cell>
          <Cell><Label>市盈</Label><Sup>动</Sup><Dots /><Value>16.96</Value></Cell>
          <Cell><MoreButton>更多</MoreButton></Cell>
        </QuoteGrid>
        <ShareRow>
          <ShareGroup><span>B股报价:</span><Tint $color={GREEN}>0.676</Tint><Tint $color={GREEN}>-2.59%</Tint></ShareGroup>
          <RatioLink href="#ratio">
            <svg width="39" height="39" viewBox="0 0 39 39"><circle cx="19.5" cy="19.5" r="17.5" fill="none" stroke="#999" strokeWidth="3" /><path d="M14 16a5.5 5.5 0 1 1 8 5q-2.500 1.500-2.500 4" fill="none" stroke="#999" strokeWidth="2.5" /><circle cx="19.5" cy="29" r="1.8" fill="#999" /></svg>
            <span>(A/B)比价=<Tint $color={RED}>2.51</Tint></span>
            <span>&gt;</span>
          </RatioLink>
        </ShareRow>
      </Quote>

      <Tabs>
        <Tab>分时</Tab>
        <Tab>五日</Tab>
        <Tab $active>日K</Tab>
        <Tab>周K</Tab>
        <Tab>月K</Tab>
        <Tab $grow={212}>更多<Caret /></Tab>
        <Tab $grow={92} aria-label="设置"><Gear /></Tab>
      </Tabs>

      <AverageBar>
        <Dropdown label="主图指标" value="均线" tight />
        <Averages>
          <Reading color={INK} down>MA5:12.43</Reading>
          <Reading color={YELLOW}>10:12.84</Reading>
          <Reading color={MAGENTA} down>20:12.86</Reading>
          <Reading color={NAVY}>250:10.36</Reading>
          <Reading color={SKY}>60:11.61</Reading>
        </Averages>
        <PillButton>DK点<svg width="14" height="14" viewBox="0 0 14 14"><path d="M14 0V14H0z" fill="#222" /></svg></PillButton>
        <PillButton $wide>前复权</PillButton>
      </AverageBar>

      <Charts>
        <Column>
          <ChartBox>
            <DayChart />
            <FloatRow $start={35} $end={68}>
              <RoundButton aria-label="最早"><svg width="34" height="38" viewBox="0 0 34 38" fill="none" stroke={ORANGE} strokeWidth="4"><path d="M20 2L3 19L20 36M32 2L15 19L32 36" /></svg></RoundButton>
              <RoundButton aria-label="缩小"><svg width="38" height="4" viewBox="0 0 38 4"><path d="M0 2H38" stroke={ORANGE} strokeWidth="4" /></svg></RoundButton>
              <RoundButton aria-label="放大"><svg width="38" height="38" viewBox="0 0 38 38"><path d="M0 19H38M19 0V38" stroke={ORANGE} strokeWidth="4" /></svg></RoundButton>
              <RoundButton aria-label="向左"><svg width="22" height="38" viewBox="0 0 22 38"><path d="M20 2L3 19L20 36" fill="none" stroke={ORANGE} strokeWidth="4" /></svg></RoundButton>
            </FloatRow>
          </ChartBox>
          <IndicatorBar $size={16} $gap={5}>
            <Dropdown label="指标一" value="成交量" />
            <Tint $color={INK}>13.32万↓</Tint>
            <Tint $color={YELLOW}>MA1:14.45万↓</Tint>
            <Tint $color={PURPLE}>MA2:22.88万↓</Tint>
            <Tint $color={CANDLE_GREEN}>MA3:30.70万↓</Tint>
            <Tint $color="#888">虚拟成交量:18.60万</Tint>
            <CollapseButton aria-label="收起">
              <svg width="20" height="34" viewBox="0 0 20 34"><path d="M2 2L17 17L2 32" fill="none" stroke="#fff" strokeWidth="4" /></svg>
            </CollapseButton>
          </IndicatorBar>
          <VolumeChart />
          <IndicatorBar $size={38} $gap={14}>
            <Dropdown label="指标二" value="MACD" />
            <Reading color={INK} down>DIF:0.16</Reading>
            <Reading color={YELLOW} down>DEA:0.32</Reading>
            <Reading color={PURPLE} down>M:-0.32</Reading>
          </IndicatorBar>
          <MacdChart />
          <IndicatorBar $size={43} $gap={20}>
            <Dropdown label="指标三" value="KDJ" />
            <Reading color={INK} down>K:67.85</Reading>
            <Reading color={YELLOW} down>D:75.16</Reading>
            <Reading color={PURPLE} down>J:53.24</Reading>
          </IndicatorBar>
          <KdjChart />
          <IndicatorBar $size={34} $gap={9}>
            <Dropdown label="指标四" value="BOLL" />
            <Reading color={INK} down>MID:12.86</Reading>
            <Reading color={YELLOW}>UP:14.11</Reading>
            <Reading color={PURPLE} down>LOW:11.61</Reading>
          </IndicatorBar>
          <BollChart />
          <TimeAxis><TimeTicks /></TimeAxis>
        </Column>

        <Column>
          <ChartBox>
            <ChipChart />
            <FloatRow $start={40} $end={73}>
              <RoundButton $grey aria-label="向右"><svg width="22" height="38" viewBox="0 0 22 38"><path d="M2 2L19 19L2 36" fill="none" stroke="#666" strokeWidth="4" /></svg></RoundButton>
              <RoundButton aria-label="全屏"><svg width="40" height="40" viewBox="0 0 40 40" fill="none" stroke={ORANGE} strokeWidth="4"><path d="M18 2H2V18M2 2L17 17M38 22V38H22M38 38L23 23" /></svg></RoundButton>
            </FloatRow>
          </ChartBox>
          <Legend>
            <LegendItem $color="#73b756">套牢</LegendItem>
            <LegendItem $color="#d6544e">获利</LegendItem>
            <LegendItem $color="#4a80dc">平均</LegendItem>
          </Legend>
          <Stats>
            <StatRow><dt>获利比例：</dt><dd>33.42%</dd></StatRow>
            <StatRow><dt>平均成本：</dt><dd>12.70</dd></StatRow>
            <StatRow><dt>90%成本：</dt><dd>10.26-13.66</dd></StatRow>
            <StatRow><dt>集中度：</dt><dd>14.21%</dd></StatRow>
            <StatRow $muted>
              <dt>说明<svg width="41" height="41" viewBox="0 0 41 41"><circle cx="20.5" cy="20.5" r="20.5" fill="#ccc" /><path d="M20.500 18V30" stroke="#fff" strokeWidth="5" strokeLinecap="round" /><circle cx="20.5" cy="11.5" r="2.8" fill="#fff" /></svg></dt>
              <dd>2025-12-09</dd>
            </StatRow>
          </Stats>
        </Column>
      </Charts>

      <Banner>
        <svg width="54" height="48" viewBox="0 0 54 48" fill={ORANGE}><path d="M0 16H6V34H0zM11 16L50 4V1H54V47H50V43L34 39Q32 46 26 43Q20 44 19 37L11 34z" /></svg>
        <BannerText href="#contest">模拟交易赢大奖，周周提现最高2000元</BannerText>
        <CloseButton aria-label="关闭"><svg width="39" height="42" viewBox="0 0 39 42"><path d="M2 3L37 39M37 3L2 39" stroke={ORANGE} strokeWidth="3.5" /></svg></CloseButton>
      </Banner>
      <Spacer />

      <BottomBar>
        <IndexCell href="#index">
          <svg width="24" height="9" viewBox="0 0 24 9"><path d="M0 9H24L12 0z" fill="#777" /></svg>
          <span>3910.21</span>
          <IndexLine><Tint $color={GREY}>上证</Tint><span>-0.35%</span></IndexLine>
        </IndexCell>
        <BottomItem>
          <svg width="78" height="70" viewBox="0 0 78 70" fill="none" stroke="#666" strokeWidth="3.5" strokeLinecap="round" strokeLinejoin="round">
            <path d="M24 8A31 31 0 0 1 68 46M68 46L75 41M68 46L66 50M54 62A31 31 0 0 1 10 24M10 24L3 29M10 24L12 20M29 20L39 31L49 20M39 31V52M27 32H51M27 42H51" />
          </svg>
          交易
        </BottomItem>
        <BottomItem>
          <svg width="66" height="70" viewBox="0 0 66 70" fill="none" stroke="#666" strokeWidth="3.5" strokeLinecap="round">
            <path d="M44 4H8Q2 4 2 10V60Q2 66 8 66H58Q64 66 64 60V24" /><path d="M28 41L54 15M60 8L62 6" strokeWidth="6" /><path d="M23 46L25 39L30 44z" fill="#666" strokeWidth="1" />
          </svg>
          发帖
        </BottomItem>
        <BottomItem>
          <svg width="62" height="70" viewBox="0 0 62 70" fill="none" stroke="#666" strokeWidth="3.5" strokeLinejoin="round">
            <rect x="2" y="6" width="26" height="26" rx="5" /><rect x="2" y="38" width="26" height="26" rx="5" /><rect x="34" y="38" width="26" height="26" rx="5" /><path d="M47 4L61 19L47 34L33 19z" />
          </svg>
          功能
        </BottomItem>
        <BottomItem>
          <svg width="68" height="70" viewBox="0 0 68 70"><circle cx="34" cy="35" r="32" fill="none" stroke="#666" strokeWidth="3.5" /><g fill="#666"><circle cx="20" cy="35" r="3.5" /><circle cx="34" cy="35" r="3.5" /><circle cx="48" cy="35" r="3.5" /></g></svg>
          设自选
        </BottomItem>
      </BottomBar>

      <SystemNav>
        <button aria-label="最近任务"><svg width="52" height="52" viewBox="0 0 52 52"><rect x="2" y="2" width="48" height="48" rx="3" fill="none" stroke="#888" strokeWidth="4" /></svg></button>
        <button aria-label="主屏幕"><svg width="58" height="58" viewBox="0 0 58 58"><circle cx="29" cy="29" r="26" fill="none" stroke="#888" strokeWidth="4.5" /></svg></button>
        <button aria-label="后退"><svg width="52" height="58" viewBox="0 0 52 58"><path d="M48 4V54L4 29z" fill="none" stroke="#888" strokeWidth="4.5" strokeLinejoin="round" /></svg></button>
      </SystemNav>
    </Page>
  );
}
